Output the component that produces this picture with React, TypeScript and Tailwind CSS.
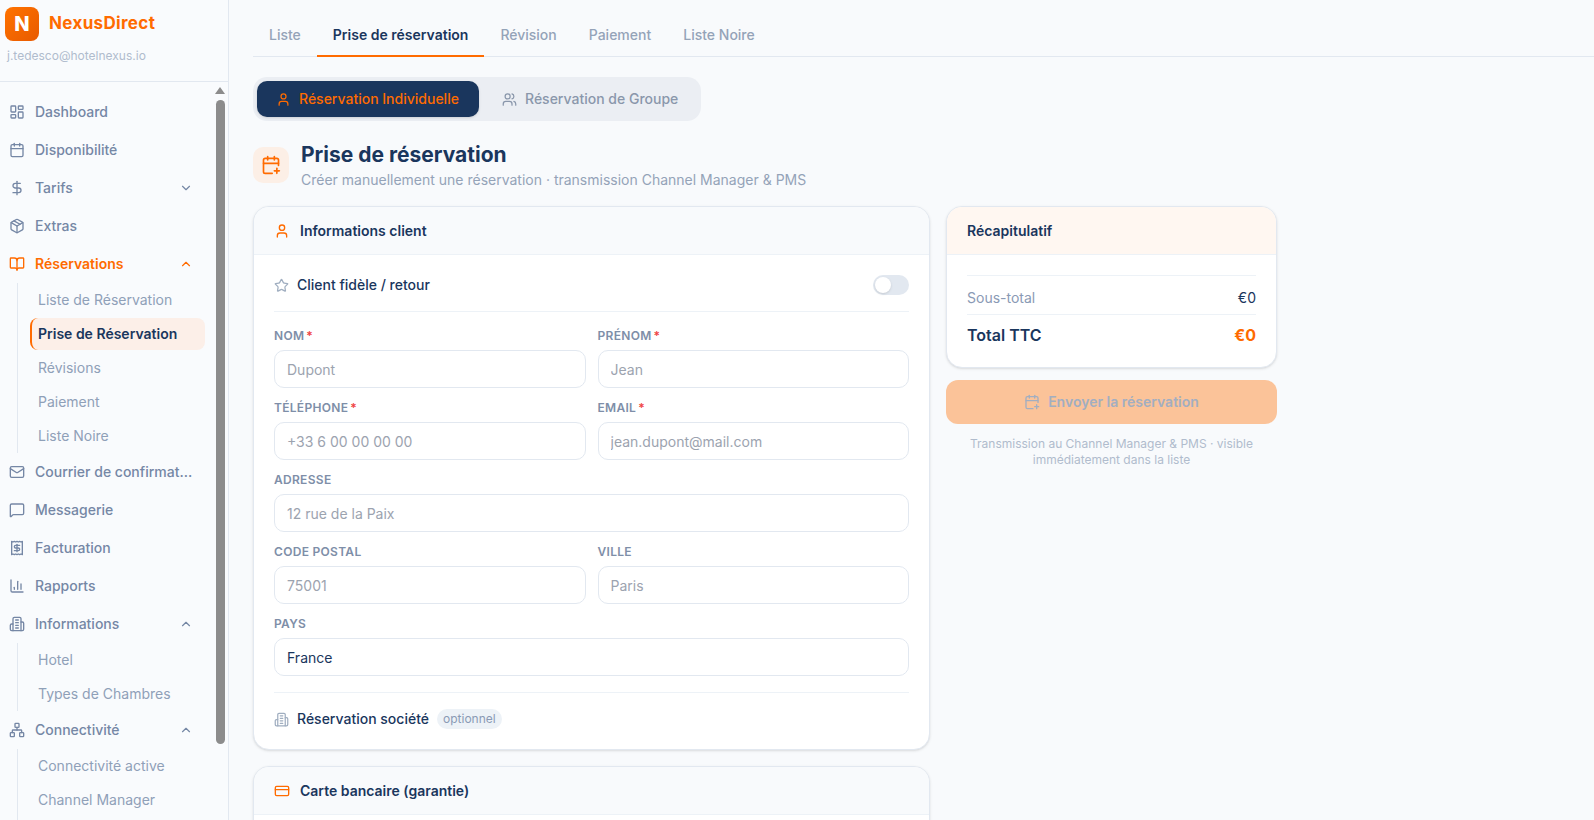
import type { ReactNode } from 'react'
import {
  BookOpen,
  Calendar,
  CalendarPlus,
  ChartColumn,
  ChevronDown,
  ChevronUp,
  CreditCard,
  DollarSign,
  LayoutDashboard,
  Mail,
  MessageSquare,
  Network,
  Package,
  Receipt,
  Star,
  User,
  Users,
} from 'lucide-react'

// older lucide Building2, the current one has no floor lines
function BuildingIcon({ size = 16, className = '' }: { size?: number; className?: string }) {
  return (
    <svg width={size} height={size} viewBox="0 0 24 24" fill="none" stroke="currentColor" strokeWidth="2" strokeLinecap="round" strokeLinejoin="round" className={className}>
      <path d="M6 22V4a2 2 0 0 1 2-2h8a2 2 0 0 1 2 2v18Z" />
      <path d="M6 12H4a2 2 0 0 0-2 2v6a2 2 0 0 0 2 2h2" />
      <path d="M18 9h2a2 2 0 0 1 2 2v9a2 2 0 0 1-2 2h-2" />
      <path d="M10 6h4" />
      <path d="M10 10h4" />
      <path d="M10 14h4" />
      <path d="M10 18h4" />
    </svg>
  )
}

function NavItem({ icon, label, chevron, active }: { icon: ReactNode; label: string; chevron?: 'up' | 'down'; active?: boolean }) {
  return (
    <div className={`flex h-[38px] shrink-0 items-center pl-[9px] pr-[35px] text-sm ${active ? 'font-semibold text-[#ff6b00]' : 'font-medium text-[#7587a5]'}`}>
      <span className="flex w-[26px] shrink-0">{icon}</span>
      <span className="flex-1 truncate">{label}</span>
      {chevron === 'up' && <ChevronUp size={14} />}
      {chevron === 'down' && <ChevronDown size={14} />}
    </div>
  )
}

function SubNav({ items, active, tail }: { items: string[]; active?: string; tail?: boolean }) {
  return (
    <div className="ml-[17px] flex shrink-0 flex-col border-l border-[#e2e8f0] pl-3 pr-[23px]">
      {items.map((item) =>
        item === active ? (
          <div key={item} className="my-px flex h-8 items-center rounded-lg border-l-2 border-[#ff6b00] bg-[#fcefe8] pl-1.5 text-sm font-semibold text-[#1a365d]">
            {item}
          </div>
        ) : (
          <div key={item} className="flex h-[34px] items-center pl-2 text-sm text-[#8fa0b8]">
            {item}
          </div>
        ),
      )}
      {tail && <div className="h-[34px]" />}
    </div>
  )
}

function Sidebar() {
  return (
    <aside className="relative flex h-full w-[229px] shrink-0 flex-col overflow-hidden border-r border-[#e2e8f0] bg-[#f9fbfd]">
      <div className="h-[82px] shrink-0 border-b border-[#e2e8f0] pl-[5px] pt-[7px]">
        <div className="flex items-center gap-2.5">
          <div className="flex h-[34px] w-[34px] items-center justify-center rounded-lg bg-gradient-to-br from-[#ff7300] to-[#e85a00] text-xl font-extrabold text-white">N</div>
          <span className="text-[17px] font-bold tracking-[0.02em] text-[#ff6b00]">NexusDirect</span>
        </div>
        <div className="mt-[7px] pl-0.5 text-xs text-[#b0bccd]">j.tedesco@hotelnexus.io</div>
      </div>

      <nav className="flex flex-col pt-[11px]">
        <NavItem icon={<LayoutDashboard size={16} />} label="Dashboard" />
        <NavItem icon={<Calendar size={16} />} label="Disponibilité" />
        <NavItem icon={<DollarSign size={16} />} label="Tarifs" chevron="down" />
        <NavItem icon={<Package size={16} />} label="Extras" />
        <NavItem icon={<BookOpen size={16} />} label="Réservations" chevron="up" active />
        <SubNav items={['Liste de Réservation', 'Prise de Réservation', 'Révisions', 'Paiement', 'Liste Noire']} active="Prise de Réservation" />
        <NavItem icon={<Mail size={16} />} label="Courrier de confirmation" />
        <NavItem icon={<MessageSquare size={16} />} label="Messagerie" />
        <NavItem icon={<Receipt size={16} />} label="Facturation" />
        <NavItem icon={<ChartColumn size={16} />} label="Rapports" />
        <NavItem icon={<BuildingIcon size={16} />} label="Informations" chevron="up" />
        <SubNav items={['Hotel', 'Types de Chambres']} />
        <NavItem icon={<Network size={16} />} label="Connectivité" chevron="up" />
        <SubNav items={['Connectivité active', 'Channel Manager']} tail />
      </nav>

      {/* scrollbar */}
      <div className="absolute right-[3px] top-[87px] h-0 w-0 border-x-[5px] border-b-[7px] border-x-transparent border-b-[#8c8c8c]" />
      <div className="absolute right-[3px] top-[100px] h-[644px] w-[9px] rounded-full bg-[#8c8c8c]" />
    </aside>
  )
}

function Field({ label, required, placeholder, value }: { label: string; required?: boolean; placeholder?: string; value?: string }) {
  return (
    <div className="min-w-0">
      <div className="mb-1.5 h-4 text-xs font-semibold uppercase leading-4 tracking-[0.025em] text-[#7e8ea8]">
        {label}
        {required && <span className="ml-0.5 text-[#ef4444]">*</span>}
      </div>
      <input
        readOnly
        placeholder={placeholder}
        defaultValue={value}
        className="h-[38px] w-full rounded-[10px] border border-[#e2e8f0] bg-white px-3 text-sm text-[#1a365d] outline-none placeholder:text-[#9ca3af]"
      />
    </div>
  )
}

function CardHeader({ icon, title }: { icon: ReactNode; title: string }) {
  return (
    <div className="flex h-12 items-center gap-2.5 border-b border-[#edf2f7] bg-[#f8fafc] px-5 text-sm font-semibold text-[#1a365d]">
      <span className="text-[#ff6b00]">{icon}</span>
      {title}
    </div>
  )
}

export default function App() {
  const tabs = ['Liste', 'Prise de réservation', 'Révision', 'Paiement', 'Liste Noire']
  return (
    <div className="flex h-screen overflow-hidden bg-[#f8fafc] font-['Inter',sans-serif]">
      <Sidebar />
      <main className="min-w-0 flex-1 overflow-hidden pl-6">
        <div className="flex h-[57px] items-end border-b border-[#e2e8f0]">
          {tabs.map((tab) => (
            <div
              key={tab}
              className={`-mb-px flex h-[42px] items-center border-b-2 px-4 text-sm ${tab === 'Prise de réservation' ? 'border-[#ff6b00] font-semibold text-[#1a365d]' : 'border-transparent font-medium text-[#94a3b8]'}`}
            >
              {tab}
            </div>
          ))}
        </div>

        <div className="mt-5 inline-flex h-11 gap-1 rounded-[14px] bg-[#ebeef3] p-1 align-top">
          <div className="flex w-[222px] items-center gap-2 rounded-[10px] bg-[#1a365d] px-[19px] text-sm font-medium text-[#ff6b00] shadow-sm">
            <User size={15} />
            Réservation Individuelle
          </div>
          <div className="flex items-center gap-2 rounded-[10px] px-[19px] text-sm font-medium text-[#8a97ab]">
            <Users size={15} />
            Réservation de Groupe
          </div>
        </div>

        <div className="mt-[19px] flex items-center gap-3">
          <div className="flex h-9 w-9 items-center justify-center rounded-[10px] bg-[#fcefe6] text-[#ff6b00]">
            <CalendarPlus size={20} />
          </div>
          <div>
            <h1 className="text-[21px] font-bold leading-[30px] text-[#1a365d]">Prise de réservation</h1>
            <p className="text-sm leading-5 text-[#94a3b8]">Créer manuellement une réservation · transmission Channel Manager &amp; PMS</p>
          </div>
        </div>

        <div className="mt-4 flex w-[1024px] items-start gap-4">
          <div className="flex min-w-0 flex-1 flex-col gap-4">
            <section className="overflow-hidden rounded-2xl border border-[#e2e8f0] bg-white shadow-sm">
              <CardHeader icon={<User size={16} />} title="Informations client" />
              <div className="p-5">
                <div className="flex items-center justify-between border-b border-[#edf2f7] pb-4">
                  <div className="flex items-center gap-2 text-sm font-medium text-[#1a365d]">
                    <Star size={15} className="text-[#a0aec0]" />
                    Client fidèle / retour
                  </div>
                  <div className="flex h-5 w-9 items-center rounded-full bg-[#e2e8f0] p-0.5">
                    <div className="h-4 w-4 rounded-full bg-white shadow-sm" />
                  </div>
                </div>
                <div className="mt-4 grid grid-cols-2 gap-x-3 gap-y-3">
                  <Field label="Nom" required placeholder="Dupont" />
                  <Field label="Prénom" required placeholder="Jean" />
                  <Field label="Téléphone" required placeholder="+33 6 00 00 00 00" />
                  <Field label="Email" required placeholder="jean.dupont@mail.com" />
                  <div className="col-span-2">
                    <Field label="Adresse" placeholder="12 rue de la Paix" />
                  </div>
                  <Field label="Code postal" placeholder="75001" />
                  <Field label="Ville" placeholder="Paris" />
                  <div className="col-span-2">
                    <Field label="Pays" value="France" />
                  </div>
                </div>
                <div className="mt-4 flex h-[37px] items-end gap-2 border-t border-[#edf2f7]">
                  <div className="flex h-5 items-center gap-2 text-sm font-medium text-[#1a365d]">
                    <BuildingIcon size={15} className="text-[#a0aec0]" />
                    Réservation société
                    <span className="flex h-5 items-center rounded-full bg-[#edf2f7] px-1.5 text-xs font-normal text-[#8a9ab5]">optionnel</span>
                  </div>
                </div>
              </div>
            </section>

            <section className="overflow-hidden rounded-2xl border border-[#e2e8f0] bg-white shadow-sm">
              <CardHeader icon={<CreditCard size={16} />} title="Carte bancaire (garantie)" />
              <div className="h-40" />
            </section>
          </div>

          <div className="flex w-[331px] shrink-0 flex-col">
            <section className="overflow-hidden rounded-2xl border border-[#e2e8f0] bg-white shadow-sm">
              <div className="flex h-12 items-center border-b border-[#edf2f7] bg-[#fff7f1] px-5 text-sm font-semibold text-[#1a365d]">Récapitulatif</div>
              <div className="px-5 pb-[13px] pt-5">
                <div className="flex h-[40px] items-center justify-between border-y border-[#edf2f7] pt-1.5 text-sm text-[#8a9ab5]">
                  <span>Sous-total</span>
                  <span className="text-[#1a365d]">€0</span>
                </div>
                <div className="flex h-[39px] items-center justify-between text-base font-bold text-[#1a365d]">
                  <span className="font-semibold">Total TTC</span>
                  <span className="text-[#ff6b00]">€0</span>
                </div>
              </div>
            </section>
            <div className="mt-3 flex h-11 items-center justify-center gap-2 rounded-xl bg-[#fbc399] text-sm font-semibold text-[#a2aec1]">
              <CalendarPlus size={16} />
              Envoyer la réservation
            </div>
            <p className="mt-3 px-4 text-center text-xs leading-4 text-[#b0bccd]">Transmission au Channel Manager &amp; PMS · visible immédiatement dans la liste</p>
          </div>
        </div>
      </main>
    </div>
  )
}
